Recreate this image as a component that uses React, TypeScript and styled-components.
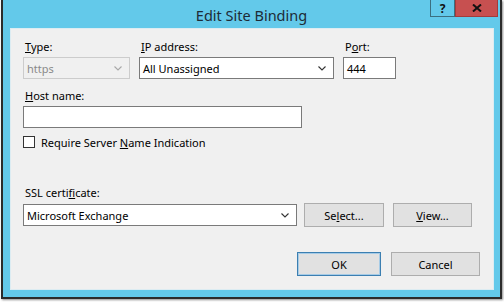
import React from 'react';
import styled, { createGlobalStyle } from 'styled-components';

const GlobalStyle = createGlobalStyle`
    html, body {
        margin: 0;
        padding: 0;
        background: #ffffff;
    }
    body {
        font-family: 'Noto Sans', 'Open Sans', sans-serif;
        font-size: 11px;
        color: #000;
    }
`;

const Page = styled.div`
    width: 504px;
    height: 302px;
    padding: 0 2px 3px 1px;
    box-sizing: border-box;
`;

const Window = styled.div`
    height: 100%;
    display: flex;
    flex-direction: column;
    background: #63c9ea;
    border: 2px solid #2b2b2b;
    border-top: none;
    box-sizing: border-box;
    box-shadow: 1px 1px 2px rgba(0, 0, 0, 0.45);
`;

const TitleBar = styled.div`
    position: relative;
    height: 28px;
    display: flex;
    align-items: center;
    justify-content: center;
    font-size: 14.5px;
    color: #1d2b36;
    padding-top: 2px;
    box-sizing: border-box;
`;

const CaptionButtons = styled.div`
    position: absolute;
    top: 0;
    right: 2px;
    display: flex;
`;

const CaptionButton = styled.div<{ $close?: boolean }>`
    width: ${p => (p.$close ? '43px' : '25px')};
    height: 17px;
    display: flex;
    align-items: center;
    justify-content: center;
    background: ${p => (p.$close ? '#c75050' : '#63c9ea')};
    border: 1px solid ${p => (p.$close ? '#a33b3b' : '#3b6f80')};
    border-top: none;
    box-sizing: border-box;
    font-weight: bold;
    font-size: 12px;
    color: #111;
`;

const Client = styled.div`
    flex: 1;
    margin: 0 6px 7px 7px;
    background: #f0f0f0;
    border: 1px solid #dcecf2;
    padding: 10px 12px 0 12px;
    display: flex;
    flex-direction: column;
`;

const TopRow = styled.div`
    display: grid;
    grid-template-columns: 107px 195px 53px;
    column-gap: 9px;
`;

const Field = styled.div`
    display: flex;
    flex-direction: column;
`;

const Label = styled.label`
    height: 15px;
    line-height: 15px;
    margin: 0 0 3px 2px;
    color: #000;
    u {
        text-decoration: underline;
        text-underline-offset: 1px;
    }
`;

const Combo = styled.div<{ $disabled?: boolean; $width?: number }>`
    height: 22px;
    width: ${p => (p.$width ? `${p.$width}px` : 'auto')};
    box-sizing: border-box;
    display: flex;
    align-items: center;
    justify-content: space-between;
    padding: 0 7px 0 3px;
    background: ${p => (p.$disabled ? '#f0f0f0' : '#ffffff')};
    border: 1px solid ${p => (p.$disabled ? '#cccccc' : '#7a7a7a')};
    color: ${p => (p.$disabled ? '#8a8a8a' : '#000')};
`;

const TextBox = styled.div<{ $width?: number }>`
    height: 22px;
    width: ${p => (p.$width ? `${p.$width}px` : 'auto')};
    box-sizing: border-box;
    display: flex;
    align-items: center;
    padding: 0 3px;
    background: #ffffff;
    border: 1px solid #7a7a7a;
`;

const Section = styled.div<{ $top: number }>`
    margin-top: ${p => p.$top}px;
    display: flex;
    flex-direction: column;
`;

const CheckRow = styled.div`
    margin-top: 7px;
    display: flex;
    align-items: center;
    gap: 6px;
    height: 14px;
`;

const CheckBox = styled.span`
    width: 12px;
    height: 12px;
    box-sizing: border-box;
    background: #fff;
    border: 1px solid #333;
`;

const CertRow = styled.div`
    display: flex;
    align-items: center;
`;

const Button = styled.div<{ $width: number; $default?: boolean; $gap?: number }>`
    width: ${p => p.$width}px;
    height: 24px;
    box-sizing: border-box;
    display: flex;
    align-items: center;
    justify-content: center;
    background: #e1e1e1;
    border: 1px solid ${p => (p.$default ? '#3c7fb1' : '#adadad')};
    box-shadow: ${p => (p.$default ? 'inset 0 0 0 1px #a6cbe6' : 'none')};
    margin-left: ${p => p.$gap ?? 0}px;
`;

const Footer = styled.div`
    margin-top: 25px;
    display: flex;
    justify-content: flex-end;
    padding-right: 1px;
`;

const Chevron = ({ color = '#333' }: { color?: string }) => (
    <svg width="8" height="5" viewBox="0 0 8 5">
        <path d="M0.5 0.5 L4 4 L7.5 0.5" fill="none" stroke={color} strokeWidth="1.1" />
    </svg>
);

const App: React.FC = () => {
    return (
        <Page>
            <GlobalStyle />
            <Window>
                <TitleBar>
                    Edit Site Binding
                    <CaptionButtons>
                        <CaptionButton>?</CaptionButton>
                        <CaptionButton $close>
                            <svg width="10" height="8" viewBox="0 0 10 8">
                                <path d="M1 0.5 L9 7.5 M9 0.5 L1 7.5" stroke="#111" strokeWidth="2" />
                            </svg>
                        </CaptionButton>
                    </CaptionButtons>
                </TitleBar>
                <Client>
                    <TopRow>
                        <Field>
                            <Label><u>T</u>ype:</Label>
                            <Combo $disabled>
                                https
                                <Chevron color="#a8a8a8" />
                            </Combo>
                        </Field>
                        <Field>
                            <Label><u>I</u>P address:</Label>
                            <Combo>
                                All Unassigned
                                <Chevron />
                            </Combo>
                        </Field>
                        <Field>
                            <Label>P<u>o</u>rt:</Label>
                            <TextBox>444</TextBox>
                        </Field>
                    </TopRow>
                    <Section $top={9}>
                        <Label><u>H</u>ost name:</Label>
                        <TextBox $width={279} />
                    </Section>
                    <CheckRow>
                        <CheckBox />
                        <span>Require Server <u>N</u>ame Indication</span>
                    </CheckRow>
                    <Section $top={36}>
                        <Label>SSL certi<u>f</u>icate:</Label>
                        <CertRow>
                            <Combo $width={274}>
                                Microsoft Exchange
                                <Chevron />
                            </Combo>
                            <Button $width={80} $gap={7}>
                                <span>Se<u>l</u>ect...</span>
                            </Button>
                            <Button $width={79} $gap={9}>
                                <span><u>V</u>iew...</span>
                            </Button>
                        </CertRow>
                    </Section>
                    <Footer>
                        <Button $width={84} $default>OK</Button>
                        <Button $width={89} $gap={10}>Cancel</Button>
                    </Footer>
                </Client>
            </Window>
        </Page>
    );
};

export default App;
